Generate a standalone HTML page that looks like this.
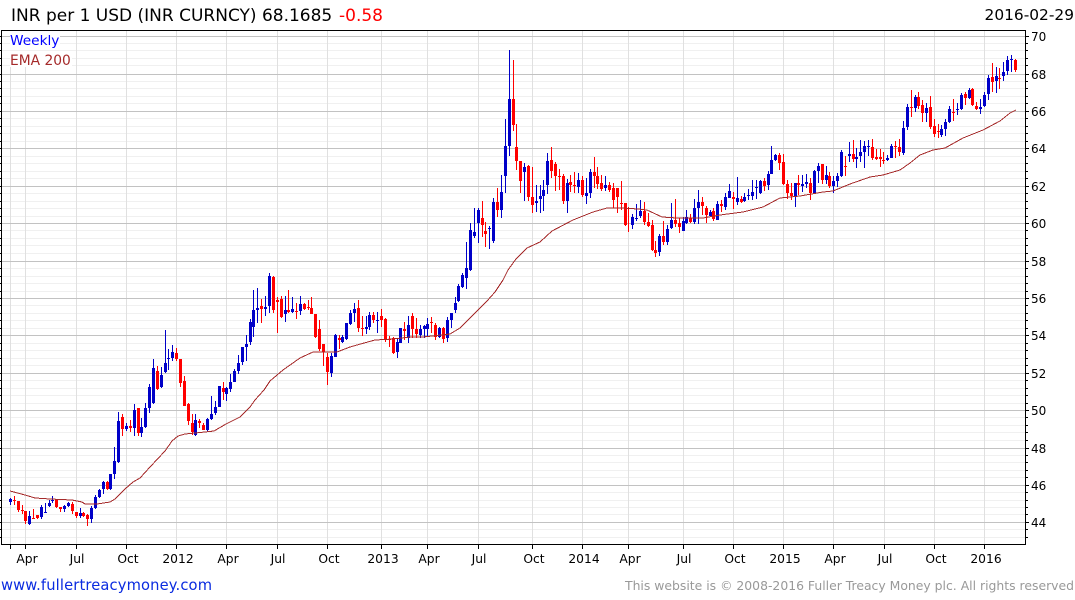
<!DOCTYPE html>
<html><head><meta charset="utf-8"><title>INR per 1 USD</title>
<style>
html,body{margin:0;padding:0;background:#fff;overflow:hidden}
svg{display:block;font-family:"DejaVu Sans","Liberation Sans",sans-serif}
.c{shape-rendering:crispEdges;fill:none}
</style></head><body>
<svg width="1075" height="600" viewBox="0 0 1075 600" xmlns="http://www.w3.org/2000/svg">
<rect width="1075" height="600" fill="#fff"/>
<path class="c" stroke="#f0f0f0" d="M2 43.5H1025M2 50.5H1025M2 58.5H1025M2 65.5H1025M2 81.5H1025M2 88.5H1025M2 96.5H1025M2 103.5H1025M2 118.5H1025M2 126.5H1025M2 133.5H1025M2 141.5H1025M2 156.5H1025M2 163.5H1025M2 171.5H1025M2 178.5H1025M2 193.5H1025M2 201.5H1025M2 208.5H1025M2 216.5H1025M2 230.5H1025M2 238.5H1025M2 245.5H1025M2 253.5H1025M2 268.5H1025M2 276.5H1025M2 283.5H1025M2 291.5H1025M2 305.5H1025M2 313.5H1025M2 320.5H1025M2 328.5H1025M2 343.5H1025M2 350.5H1025M2 358.5H1025M2 365.5H1025M2 380.5H1025M2 388.5H1025M2 395.5H1025M2 403.5H1025M2 417.5H1025M2 425.5H1025M2 432.5H1025M2 440.5H1025M2 455.5H1025M2 462.5H1025M2 470.5H1025M2 477.5H1025M2 492.5H1025M2 500.5H1025M2 507.5H1025M2 514.5H1025M2 529.5H1025M2 537.5H1025"/>
<path class="c" stroke="#e0e0e0" d="M10.5 66V544M25.5 66V544M76.5 31V544M126.5 31V544M176.5 31V544M226.5 31V544M277.5 31V544M327.5 31V544M381.5 31V544M427.5 31V544M478.5 31V544M532.5 31V544M582.5 31V544M628.5 31V544M683.5 31V544M733.5 31V544M783.5 31V544M833.5 31V544M884.5 31V544M934.5 31V544M984.5 31V544"/>
<path class="c" stroke="#c2c2c2" d="M2 36.5H1025M2 74.5H1025M2 111.5H1025M2 148.5H1025M2 186.5H1025M2 223.5H1025M2 261.5H1025M2 298.5H1025M2 335.5H1025M2 373.5H1025M2 410.5H1025M2 448.5H1025M2 485.5H1025M2 522.5H1025"/>
<rect x="10" y="33" width="50" height="15" fill="#fff"/>
<rect x="10" y="52" width="62" height="15" fill="#fff"/>

<path class="c" stroke="#0000c8" d="M10.5 498V505M29.5 511V525M41.5 505V519M45.5 503V513M49.5 500V507M52.5 496V503M64.5 505V512M68.5 502V507M80.5 508V518M91.5 506V523M95.5 495V509M99.5 489V498M103.5 481V494M110.5 474V490M114.5 447V479M118.5 412V463M126.5 423V431M134.5 404V436M141.5 418V437M145.5 403V428M149.5 384V413M153.5 359V404M161.5 367V388M165.5 330V373M168.5 349V370M172.5 345V361M195.5 414V436M207.5 418V431M211.5 396V420M215.5 401V415M219.5 386V407M226.5 387V401M230.5 374V392M234.5 369V382M238.5 355V374M242.5 347V365M246.5 335V361M250.5 319V345M253.5 290V337M257.5 288V323M265.5 296V316M269.5 273V313M285.5 296V322M292.5 297V313M300.5 296V315M331.5 353V377M335.5 334V357M342.5 335V343M346.5 323V340M350.5 310V325M354.5 303V322M366.5 316V334M369.5 312V330M377.5 312V333M397.5 338V358M400.5 328V343M408.5 316V343M420.5 325V338M424.5 325V338M427.5 318V336M439.5 327V338M447.5 317V342M451.5 313V328M455.5 297V313M458.5 284V302M462.5 273V288M466.5 242V289M470.5 223V271M474.5 208V238M478.5 208V243M489.5 226V249M493.5 198V243M501.5 175V218M505.5 119V193M509.5 50V156M524.5 163V201M536.5 185V212M540.5 185V213M543.5 180V211M547.5 153V194M567.5 179V213M578.5 173V193M586.5 178V204M590.5 169V198M605.5 176V191M632.5 214V229M636.5 204V221M640.5 200V218M659.5 234V256M667.5 225V245M671.5 203V229M683.5 217V231M686.5 210V224M694.5 199V224M698.5 190V224M710.5 210V217M717.5 201V220M725.5 193V210M729.5 184V198M737.5 177V205M744.5 193V202M748.5 189V200M752.5 180V200M756.5 180V199M760.5 180V194M768.5 171V190M771.5 146V174M775.5 154V161M795.5 183V207M802.5 175V192M806.5 174V188M814.5 170V194M818.5 163V183M826.5 166V184M833.5 176V193M837.5 173V187M841.5 150V177M849.5 142V162M856.5 148V168M860.5 140V162M864.5 141V168M868.5 140V156M887.5 155V161M891.5 144V158M903.5 121V155M907.5 104V130M915.5 95V112M926.5 103V122M941.5 125V137M945.5 119V136M949.5 106V123M957.5 103V115M961.5 93V110M969.5 88V99M980.5 99V114M984.5 92V107M988.5 75V100M996.5 67V93M1003.5 62V81M1007.5 56V75M1011.5 55V72"/>
<path class="c" stroke="#0000c8" stroke-width="3" d="M10.5 499V502M29.5 516V524M41.5 507V517M45.5 512V513M49.5 503V506M52.5 500V501M64.5 506V509M68.5 503V506M80.5 513V516M91.5 508V519M95.5 497V508M99.5 490V497M103.5 482V489M110.5 474V489M114.5 461V474M118.5 421V462M126.5 426V429M134.5 410V428M141.5 427V433M145.5 408V427M149.5 387V408M153.5 368V403M161.5 375V387M165.5 363V372M168.5 358V359M172.5 352V358M195.5 420V435M207.5 419V430M211.5 414V419M215.5 407V413M219.5 386V407M226.5 388V394M230.5 382V389M234.5 371V382M238.5 363V371M242.5 347V362M246.5 344V347M250.5 322V342M253.5 310V327M257.5 308V310M265.5 307V309M269.5 276V306M285.5 310V314M292.5 309V312M300.5 304V311M331.5 356V373M335.5 335V357M342.5 337V342M346.5 323V339M350.5 313V324M354.5 309V313M366.5 327V329M369.5 315V327M377.5 320V321M397.5 342V352M400.5 328V343M408.5 325V338M420.5 329V335M424.5 326V329M427.5 324V329M439.5 328V337M447.5 320V338M451.5 313V320M455.5 303V310M458.5 286V301M462.5 275V287M466.5 268V278M470.5 230V270M474.5 232V236M478.5 210V223M489.5 228V229M493.5 202V241M501.5 192V210M505.5 146V176M509.5 99V146M524.5 167V172M536.5 201V203M540.5 196V199M543.5 190V196M547.5 161V185M567.5 183V201M578.5 180V187M586.5 193V196M590.5 172V193M605.5 185V188M632.5 217V225M636.5 218V219M640.5 211V216M659.5 236V252M667.5 229V242M671.5 220V228M683.5 221V231M686.5 217V223M694.5 208V222M698.5 202V208M710.5 212V216M717.5 204V220M725.5 197V207M729.5 191V198M737.5 198V202M744.5 197V201M748.5 195V196M752.5 192V196M756.5 187V188M760.5 181V193M768.5 174V185M771.5 160V174M775.5 155V160M795.5 183V196M802.5 184V186M806.5 182V184M814.5 171V193M818.5 166V171M826.5 175V180M833.5 181V186M837.5 176V181M841.5 152V176M849.5 154V156M856.5 157V159M860.5 152V156M864.5 146V152M868.5 146V147M887.5 158V160M891.5 146V158M903.5 128V153M907.5 107V127M915.5 97V108M926.5 108V113M941.5 129V135M945.5 122V129M949.5 109V122M957.5 109V110M961.5 95V109M969.5 90V98M980.5 107V109M984.5 95V106M988.5 78V94M996.5 76V81M1003.5 72V76M1007.5 60V71M1011.5 59V60"/>
<path class="c" stroke="#f00" d="M14.5 496V505M18.5 501V512M22.5 505V514M25.5 511V524M33.5 509V519M37.5 515V519M56.5 499V508M60.5 507V512M72.5 502V514M76.5 512V518M83.5 512V517M87.5 514V526M107.5 481V490M122.5 414V436M130.5 420V432M138.5 408V436M157.5 366V390M176.5 348V361M180.5 359V387M184.5 376V406M188.5 403V425M192.5 414V435M199.5 419V428M203.5 423V430M223.5 382V400M261.5 299V323M273.5 276V313M277.5 297V333M281.5 296V318M288.5 290V313M296.5 303V319M304.5 303V310M308.5 300V310M311.5 297V314M315.5 314V338M319.5 320V351M323.5 344V366M327.5 353V385M339.5 335V349M358.5 300V332M362.5 316V336M373.5 312V323M381.5 309V327M385.5 318V342M389.5 336V347M393.5 337V354M404.5 322V340M412.5 313V338M416.5 318V338M431.5 317V333M435.5 323V340M443.5 327V343M482.5 201V237M485.5 222V247M497.5 188V217M513.5 60V131M516.5 124V170M520.5 161V193M528.5 165V201M532.5 167V213M551.5 147V178M555.5 162V191M559.5 169V190M563.5 174V204M570.5 175V192M574.5 172V193M582.5 176V197M594.5 157V188M597.5 167V189M601.5 175V191M609.5 182V192M613.5 183V208M617.5 188V213M621.5 181V210M625.5 203V226M628.5 207V232M644.5 202V225M648.5 213V227M652.5 220V251M655.5 241V257M663.5 221V245M675.5 199V227M679.5 218V233M690.5 214V223M702.5 197V215M706.5 206V223M713.5 208V221M721.5 200V212M733.5 192V209M741.5 196V203M764.5 178V191M779.5 153V170M783.5 154V185M787.5 180V199M791.5 183V200M798.5 175V195M810.5 178V200M822.5 164V184M829.5 172V188M845.5 156V176M853.5 140V162M872.5 139V160M876.5 149V160M880.5 149V167M883.5 152V164M895.5 141V158M899.5 139V156M911.5 90V117M918.5 92V109M922.5 100V122M930.5 96V129M934.5 119V137M938.5 124V138M953.5 99V121M965.5 92V105M972.5 88V106M976.5 102V110M992.5 63V92M999.5 68V89M1015.5 59V72"/>
<path class="c" stroke="#f00" stroke-width="3" d="M14.5 500V501M18.5 501V510M22.5 510V511M25.5 511V521M33.5 518V519M37.5 515V518M56.5 499V507M60.5 507V509M72.5 504V511M76.5 512V516M83.5 513V516M87.5 515V519M107.5 482V489M122.5 417V429M130.5 426V428M138.5 408V433M157.5 371V389M176.5 353V359M180.5 359V383M184.5 381V406M188.5 404V421M192.5 423V432M199.5 421V423M203.5 425V430M223.5 388V392M261.5 306V309M273.5 277V310M277.5 300V302M281.5 299V317M288.5 310V312M296.5 311V312M304.5 304V309M308.5 307V308M311.5 308V314M315.5 314V337M319.5 329V349M323.5 344V352M327.5 357V372M339.5 338V340M358.5 308V328M362.5 328V329M373.5 315V320M381.5 316V320M385.5 319V340M389.5 339V340M393.5 338V353M404.5 329V331M412.5 316V329M416.5 329V334M431.5 322V323M435.5 325V337M443.5 328V339M482.5 218V225M485.5 231V234M497.5 202V210M513.5 99V125M516.5 147V161M520.5 161V181M528.5 166V197M532.5 197V205M551.5 160V171M555.5 164V176M559.5 176V177M563.5 176V201M570.5 182V185M574.5 185V186M582.5 180V195M594.5 172V176M597.5 176V184M601.5 183V189M609.5 185V190M613.5 188V200M617.5 188V197M621.5 203V204M625.5 203V225M628.5 208V209M644.5 211V222M648.5 222V226M652.5 225V250M655.5 250V253M663.5 236V242M675.5 220V224M679.5 223V227M690.5 218V222M702.5 202V206M706.5 208V215M713.5 211V219M721.5 204V206M733.5 197V199M741.5 199V202M764.5 181V186M779.5 155V163M783.5 162V184M787.5 184V193M791.5 193V196M798.5 183V185M810.5 183V193M822.5 164V180M829.5 176V186M845.5 166V167M853.5 154V159M872.5 147V158M876.5 157V159M880.5 157V159M883.5 160V161M895.5 146V147M899.5 147V152M911.5 107V108M918.5 97V106M922.5 105V113M930.5 107V127M934.5 126V134M938.5 131V132M953.5 112V113M965.5 94V98M972.5 89V105M976.5 106V109M992.5 77V82M999.5 78V79M1015.5 60V70"/>

<polyline class="c" stroke="#a52a2a" points="10,491 25,495 35,498 50,499 72,500 82,502 85,504 97,504 110,502 115,499 125,489 133,482 140,478 150,467 165,451 172,441 178,436 185,434 205,432 214,431 226,424 240,417 250,407 255,400 264,390 270,381 283,370 300,358 313,352 337,352 350,347 357,345 375,340 393,339 410,337 423,337 450,334 460,328 470,318 479,309 487,301 495,292 503,280 508,270 516,259 527,248 540,242 552,231 573,220 593,212 607,208 623,208 638,209 647,210 662,217 677,218 703,218 720,215 743,212 763,207 780,198 800,196 823,192 833,191 850,184 870,177 883,175 900,170 910,163 920,155 933,150 945,148 963,138 983,130 1000,121 1010,113 1016,110"/>

<path class="c" stroke="#000" d="M1 30.5H1026M1.5 30V545M1 544.5H1026M1025.5 30V545"/>
<path class="c" stroke="#000" d="M0 43.5H1M0 50.5H1M0 58.5H1M0 65.5H1M0 81.5H1M0 88.5H1M0 96.5H1M0 103.5H1M0 118.5H1M0 126.5H1M0 133.5H1M0 141.5H1M0 156.5H1M0 163.5H1M0 171.5H1M0 178.5H1M0 193.5H1M0 201.5H1M0 208.5H1M0 216.5H1M0 230.5H1M0 238.5H1M0 245.5H1M0 253.5H1M0 268.5H1M0 276.5H1M0 283.5H1M0 291.5H1M0 305.5H1M0 313.5H1M0 320.5H1M0 328.5H1M0 343.5H1M0 350.5H1M0 358.5H1M0 365.5H1M0 380.5H1M0 388.5H1M0 395.5H1M0 403.5H1M0 417.5H1M0 425.5H1M0 432.5H1M0 440.5H1M0 455.5H1M0 462.5H1M0 470.5H1M0 477.5H1M0 492.5H1M0 500.5H1M0 507.5H1M0 514.5H1M0 529.5H1M0 537.5H1M0 36.5H1M0 74.5H1M0 111.5H1M0 148.5H1M0 186.5H1M0 223.5H1M0 261.5H1M0 298.5H1M0 335.5H1M0 373.5H1M0 410.5H1M0 448.5H1M0 485.5H1M0 522.5H1
M1026 43.5H1028M1026 50.5H1028M1026 58.5H1028M1026 65.5H1028M1026 81.5H1028M1026 88.5H1028M1026 96.5H1028M1026 103.5H1028M1026 118.5H1028M1026 126.5H1028M1026 133.5H1028M1026 141.5H1028M1026 156.5H1028M1026 163.5H1028M1026 171.5H1028M1026 178.5H1028M1026 193.5H1028M1026 201.5H1028M1026 208.5H1028M1026 216.5H1028M1026 230.5H1028M1026 238.5H1028M1026 245.5H1028M1026 253.5H1028M1026 268.5H1028M1026 276.5H1028M1026 283.5H1028M1026 291.5H1028M1026 305.5H1028M1026 313.5H1028M1026 320.5H1028M1026 328.5H1028M1026 343.5H1028M1026 350.5H1028M1026 358.5H1028M1026 365.5H1028M1026 380.5H1028M1026 388.5H1028M1026 395.5H1028M1026 403.5H1028M1026 417.5H1028M1026 425.5H1028M1026 432.5H1028M1026 440.5H1028M1026 455.5H1028M1026 462.5H1028M1026 470.5H1028M1026 477.5H1028M1026 492.5H1028M1026 500.5H1028M1026 507.5H1028M1026 514.5H1028M1026 529.5H1028M1026 537.5H1028
M1026 36.5H1029M1026 74.5H1029M1026 111.5H1029M1026 148.5H1029M1026 186.5H1029M1026 223.5H1029M1026 261.5H1029M1026 298.5H1029M1026 335.5H1029M1026 373.5H1029M1026 410.5H1029M1026 448.5H1029M1026 485.5H1029M1026 522.5H1029
M10.5 545V549M25.5 545V549M76.5 545V549M126.5 545V549M176.5 545V549M226.5 545V549M277.5 545V549M327.5 545V549M381.5 545V549M427.5 545V549M478.5 545V549M532.5 545V549M582.5 545V549M628.5 545V549M683.5 545V549M733.5 545V549M783.5 545V549M833.5 545V549M884.5 545V549M934.5 545V549M984.5 545V549"/>

<text x="11" y="21" font-size="17" fill="#000">INR per 1 USD (INR CURNCY) 68.1685</text>
<text x="339" y="21" font-size="17" fill="#f00">-0.58</text>
<text x="1074" y="20" font-size="15.4" fill="#000" text-anchor="end">2016-02-29</text>
<text x="10" y="45" font-size="13.7" fill="#00f">Weekly</text>
<text x="10" y="65" font-size="13.8" fill="#a52a2a">EMA 200</text>

<g font-size="12" fill="#000">
<text x="1031" y="41">70</text><text x="1031" y="79">68</text><text x="1031" y="116">66</text><text x="1031" y="153">64</text><text x="1031" y="191">62</text><text x="1031" y="228">60</text><text x="1031" y="266">58</text><text x="1031" y="303">56</text><text x="1031" y="340">54</text><text x="1031" y="378">52</text><text x="1031" y="415">50</text><text x="1031" y="453">48</text><text x="1031" y="490">46</text><text x="1031" y="527">44</text>
</g>
<g font-size="12.3" fill="#000" text-anchor="middle">
<text x="27" y="563">Apr</text><text x="77" y="563">Jul</text><text x="128" y="563">Oct</text><text x="178" y="563">2012</text><text x="228" y="563">Apr</text><text x="278" y="563">Jul</text><text x="329" y="563">Oct</text><text x="383" y="563">2013</text><text x="429" y="563">Apr</text><text x="479" y="563">Jul</text><text x="534" y="563">Oct</text><text x="584" y="563">2014</text><text x="630" y="563">Apr</text><text x="684" y="563">Jul</text><text x="735" y="563">Oct</text><text x="785" y="563">2015</text><text x="835" y="563">Apr</text><text x="885" y="563">Jul</text><text x="936" y="563">Oct</text><text x="986" y="563">2016</text>
</g>
<text x="1" y="590" font-size="14.7" fill="#0a2be0" textLength="211">www.fullertreacymoney.com</text>
<text x="625" y="590" font-size="12.4" fill="#999" textLength="449">This website is © 2008-2016 Fuller Treacy Money plc. All rights reserved</text>
</svg>
</body></html>
